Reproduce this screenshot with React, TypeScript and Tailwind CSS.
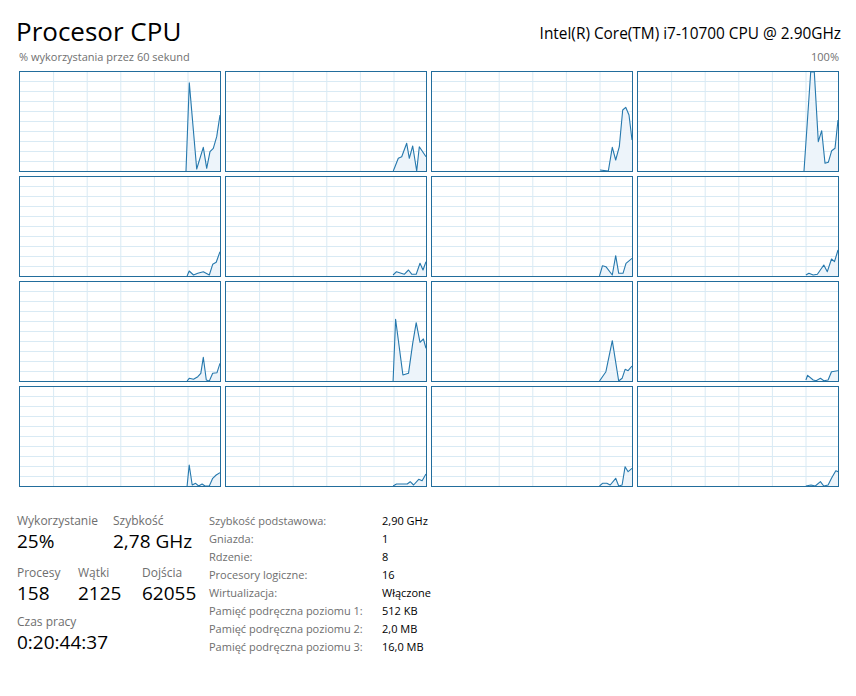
import React from 'react';

type Pt = [number, number];

// local coords inside the 200x99 plot area of each core
const cores: Pt[][] = [
  [[166, 99], [169.3, 10.7], [176.7, 97], [183.3, 75.3], [186.7, 96.3], [190, 79.7], [193.3, 76.3], [196.7, 64.7], [200, 43]],
  [[167.3, 99], [172.3, 86.3], [175.7, 84.7], [180.7, 71.3], [183.3, 86.3], [186.7, 74], [190.7, 99], [193.3, 74.7], [200, 84.7]],
  [[168, 98], [176.3, 99], [180.3, 75.3], [183.7, 88], [187.3, 74.7], [190.7, 38], [193.7, 35.3], [197, 43], [200, 68]],
  [[166, 99], [172.7, 0], [176.3, 0], [180.3, 69.7], [183.7, 58.7], [187, 91.3], [190.3, 90.3], [193.7, 78.7], [197, 76.3], [200, 48]],
  [[167.1, 99], [169.2, 94], [173.5, 98], [177.8, 96.3], [183.3, 94.7], [189.3, 98], [192.7, 87.3], [196.2, 85.3], [200, 74.7]],
  [[167.1, 98], [170.5, 94.7], [178.2, 97.3], [182.5, 93], [185.9, 97.3], [190.2, 97.3], [194, 86.3], [197, 93], [200, 84.7]],
  [[167.5, 99], [170.5, 88.7], [173.9, 89.7], [180.3, 98], [183.7, 78.7], [186.7, 96.3], [191, 96.3], [194, 86.3], [200, 81.3]],
  [[167.9, 98], [170.9, 96.3], [175.2, 98], [179.4, 97.3], [185.8, 88], [189.3, 94.7], [193.5, 82], [196.5, 84.7], [200, 73]],
  [[167.1, 99], [169.2, 96.3], [173.5, 97.3], [177.8, 94.7], [180.8, 91.3], [183.3, 75.3], [186.3, 98], [189.3, 99], [192.7, 91.3], [197, 90.7], [200, 81.3]],
  [[167.1, 99], [169.6, 37.3], [176.9, 93], [182.5, 91.3], [186.7, 61.3], [190.2, 40.7], [194, 60.3], [197.4, 57], [200, 66.3]],
  [[167.5, 99], [173.9, 89.7], [180.3, 58.7], [186.7, 99], [190.1, 96.3], [193.1, 87.3], [196.1, 88.7], [200, 84]],
  [[167.9, 98], [169.6, 93.3], [175.2, 98], [178.2, 98.7], [182.4, 96.3], [185.8, 98.7], [190.1, 98], [193.5, 89.7], [200, 88.7]],
  [[167.1, 99], [169.2, 78], [172.2, 98], [175.6, 96.3], [178.6, 99], [182.1, 97], [185, 99], [189.3, 99], [192.7, 91.3], [196.2, 88], [200, 85.7]],
  [[167.1, 99], [170.5, 97], [181.2, 97], [184.2, 94.7], [187.6, 98], [192.7, 92.3], [196.1, 93.7], [200, 87]],
  [[167.5, 99], [170.5, 96.3], [174.8, 96.3], [178.2, 98], [183.7, 91.3], [186.7, 99], [190.1, 98], [193.1, 79.7], [196.1, 84.7], [200, 81.3]],
  [[167.9, 99], [173, 98], [177.3, 99], [182.4, 94.7], [185.8, 99], [190.1, 98], [193.5, 91.3], [197.8, 83.7], [200, 84.7]],
];

function CoreChart({ pts }: { pts: Pt[] }) {
  const line = pts.map(([x, y]) => `${x},${y}`).join(' ');
  const area = `${pts[0][0]},99 ${line} 200,99`;
  return (
    <div className="h-[101px] w-[202px] border border-[#226d9c] bg-white">
      <svg viewBox="0 0 200 99" preserveAspectRatio="none" className="block h-full w-full">
        {[1, 2, 3, 4, 5].map((i) => (
          <line key={'v' + i} x1={i * 33.6} y1={0} x2={i * 33.6} y2={99} stroke="#d9eaf4" strokeWidth={1} />
        ))}
        {[1, 2, 3, 4, 5, 6, 7, 8, 9].map((i) => (
          <line key={'h' + i} x1={0} y1={i * 10 - 0.5} x2={200} y2={i * 10 - 0.5} stroke="#d9eaf4" strokeWidth={1} />
        ))}
        <polygon points={area} fill="#edf4fa" />
        <polyline points={line} fill="none" stroke="#2578ad" strokeWidth={1.1} strokeLinejoin="round" />
      </svg>
    </div>
  );
}

const details: [string, string][] = [
  ['Szybkość podstawowa:', '2,90 GHz'],
  ['Gniazda:', '1'],
  ['Rdzenie:', '8'],
  ['Procesory logiczne:', '16'],
  ['Wirtualizacja:', 'Włączone'],
  ['Pamięć podręczna poziomu 1:', '512 KB'],
  ['Pamięć podręczna poziomu 2:', '2,0 MB'],
  ['Pamięć podręczna poziomu 3:', '16,0 MB'],
];

function Stat({ label, value, className }: { label: string; value: string; className?: string }) {
  return (
    <div className={className}>
      <div className="text-[12px] leading-[16px] text-[#6e6e6e]">{label}</div>
      <div className="text-[19px] leading-[25px] text-black">{value}</div>
    </div>
  );
}

export default function App() {
  return (
    <div className="h-[696px] w-[856px] overflow-hidden bg-white font-['Open_Sans',sans-serif]">
      <div className="flex items-end justify-between pl-[16px] pr-[15px] pt-[13px]">
        <h1 className="text-[26px] leading-[36px] text-black">Procesor CPU</h1>
        <div className="pb-[5px] text-[15.4px] leading-[20px] text-black">Intel(R) Core(TM) i7-10700 CPU @ 2.90GHz</div>
      </div>
      <div className="flex justify-between pl-[19px] pr-[17px] text-[11px] leading-[16px] text-[#707070]">
        <span>% wykorzystania przez 60 sekund</span>
        <span>100%</span>
      </div>
      <div className="ml-[19px] mt-[6px] grid w-[820px] grid-cols-[repeat(4,202px)] gap-[4px]">
        {cores.map((pts, i) => (
          <CoreChart key={i} pts={pts} />
        ))}
      </div>
      <div className="mt-[26px] flex pl-[17px]">
        <div className="w-[192px]">
          <div className="flex">
            <Stat label="Wykorzystanie" value="25%" className="w-[96px]" />
            <Stat label="Szybkość" value="2,78 GHz" />
          </div>
          <div className="mt-[11px] flex">
            <Stat label="Procesy" value="158" className="w-[61px]" />
            <Stat label="Wątki" value="2125" className="w-[64px]" />
            <Stat label="Dojścia" value="62055" />
          </div>
          <Stat label="Czas pracy" value="0:20:44:37" className="mt-[8px]" />
        </div>
        <div className="-mt-[1px]">
          {details.map(([k, v]) => (
            <div key={k} className="flex text-[11px] leading-[18px]">
              <span className="w-[173px] text-[#6e6e6e]">{k}</span>
              <span className="text-black">{v}</span>
            </div>
          ))}
        </div>
      </div>
    </div>
  );
}
